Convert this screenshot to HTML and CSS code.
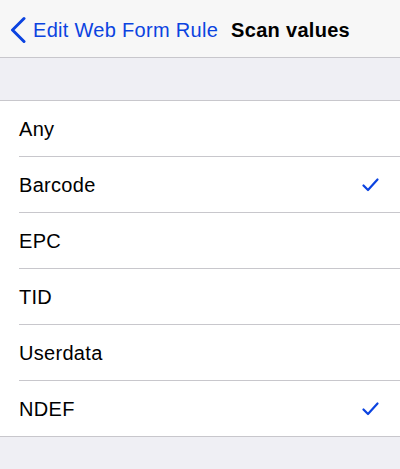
FILE: index.html
```html
<!DOCTYPE html>
<html lang="en">
<head>
<meta charset="utf-8">
<title>Scan values</title>
<link rel="stylesheet" href="styles.css">
</head>
<body>
<header class="nav">
  <a class="back" href="#">
    <svg class="chevron" width="16" height="28" viewBox="0 0 16 28" aria-hidden="true">
      <path d="M14 2.5 L2.5 14 L14 25.5" fill="none" stroke="currentColor" stroke-width="3" stroke-linecap="round" stroke-linejoin="round"/>
    </svg>
    <span class="back-label">Edit Web Form Rule</span>
  </a>
  <h1 class="title">Scan values</h1>
</header>
<div class="spacer"></div>
<ul class="list">
  <li class="row"><span class="label">Any</span></li>
  <li class="row"><span class="label">Barcode</span>
    <svg class="check" width="17" height="14" viewBox="0 0 17 14" aria-hidden="true"><path d="M1.5 7.5 L6 12 L15.5 1.5" fill="none" stroke="currentColor" stroke-width="2.2" stroke-linecap="round" stroke-linejoin="round"/></svg>
  </li>
  <li class="row"><span class="label">EPC</span></li>
  <li class="row"><span class="label">TID</span></li>
  <li class="row"><span class="label">Userdata</span></li>
  <li class="row"><span class="label">NDEF</span>
    <svg class="check" width="17" height="14" viewBox="0 0 17 14" aria-hidden="true"><path d="M1.5 7.5 L6 12 L15.5 1.5" fill="none" stroke="currentColor" stroke-width="2.2" stroke-linecap="round" stroke-linejoin="round"/></svg>
  </li>
</ul>
</body>
</html>
```

FILE: styles.css
```css
html, body {
  margin: 0;
  padding: 0;
}

body {
  background: #efeff4;
  font-family: "Liberation Sans", Arial, sans-serif;
  color: #000;
}

.nav {
  height: 58px;
  box-sizing: border-box;
  padding-top: 4px;
  background: #f7f7f7;
  border-bottom: 1px solid #c8c7cc;
  display: flex;
  align-items: center;
}

.back {
  display: flex;
  align-items: center;
  color: #0b43e0;
  text-decoration: none;
  padding-left: 10px;
}

.chevron {
  display: block;
  margin-top: -2px;
}

.back-label {
  margin-left: 7px;
  font-size: 20px;
  letter-spacing: 0.3px;
}

.title {
  margin: 0 0 0 13px;
  font-size: 20px;
  font-weight: bold;
  letter-spacing: 0.3px;
}

.spacer {
  height: 42px;
}

.list {
  list-style: none;
  margin: 0;
  padding: 0 0 0 19px;
  background: #fff;
  border-top: 1px solid #c8c7cc;
  border-bottom: 1px solid #c8c7cc;
}

.row {
  height: 55px;
  display: flex;
  align-items: center;
  justify-content: space-between;
  padding-right: 21px;
  border-bottom: 1px solid #c8c7cc;
}

.row:last-child {
  border-bottom: none;
}

.label {
  font-size: 20px;
  letter-spacing: 0.3px;
  padding-top: 2px;
}

.check {
  display: block;
  color: #0b43e0;
  margin-top: 1px;
}
```
